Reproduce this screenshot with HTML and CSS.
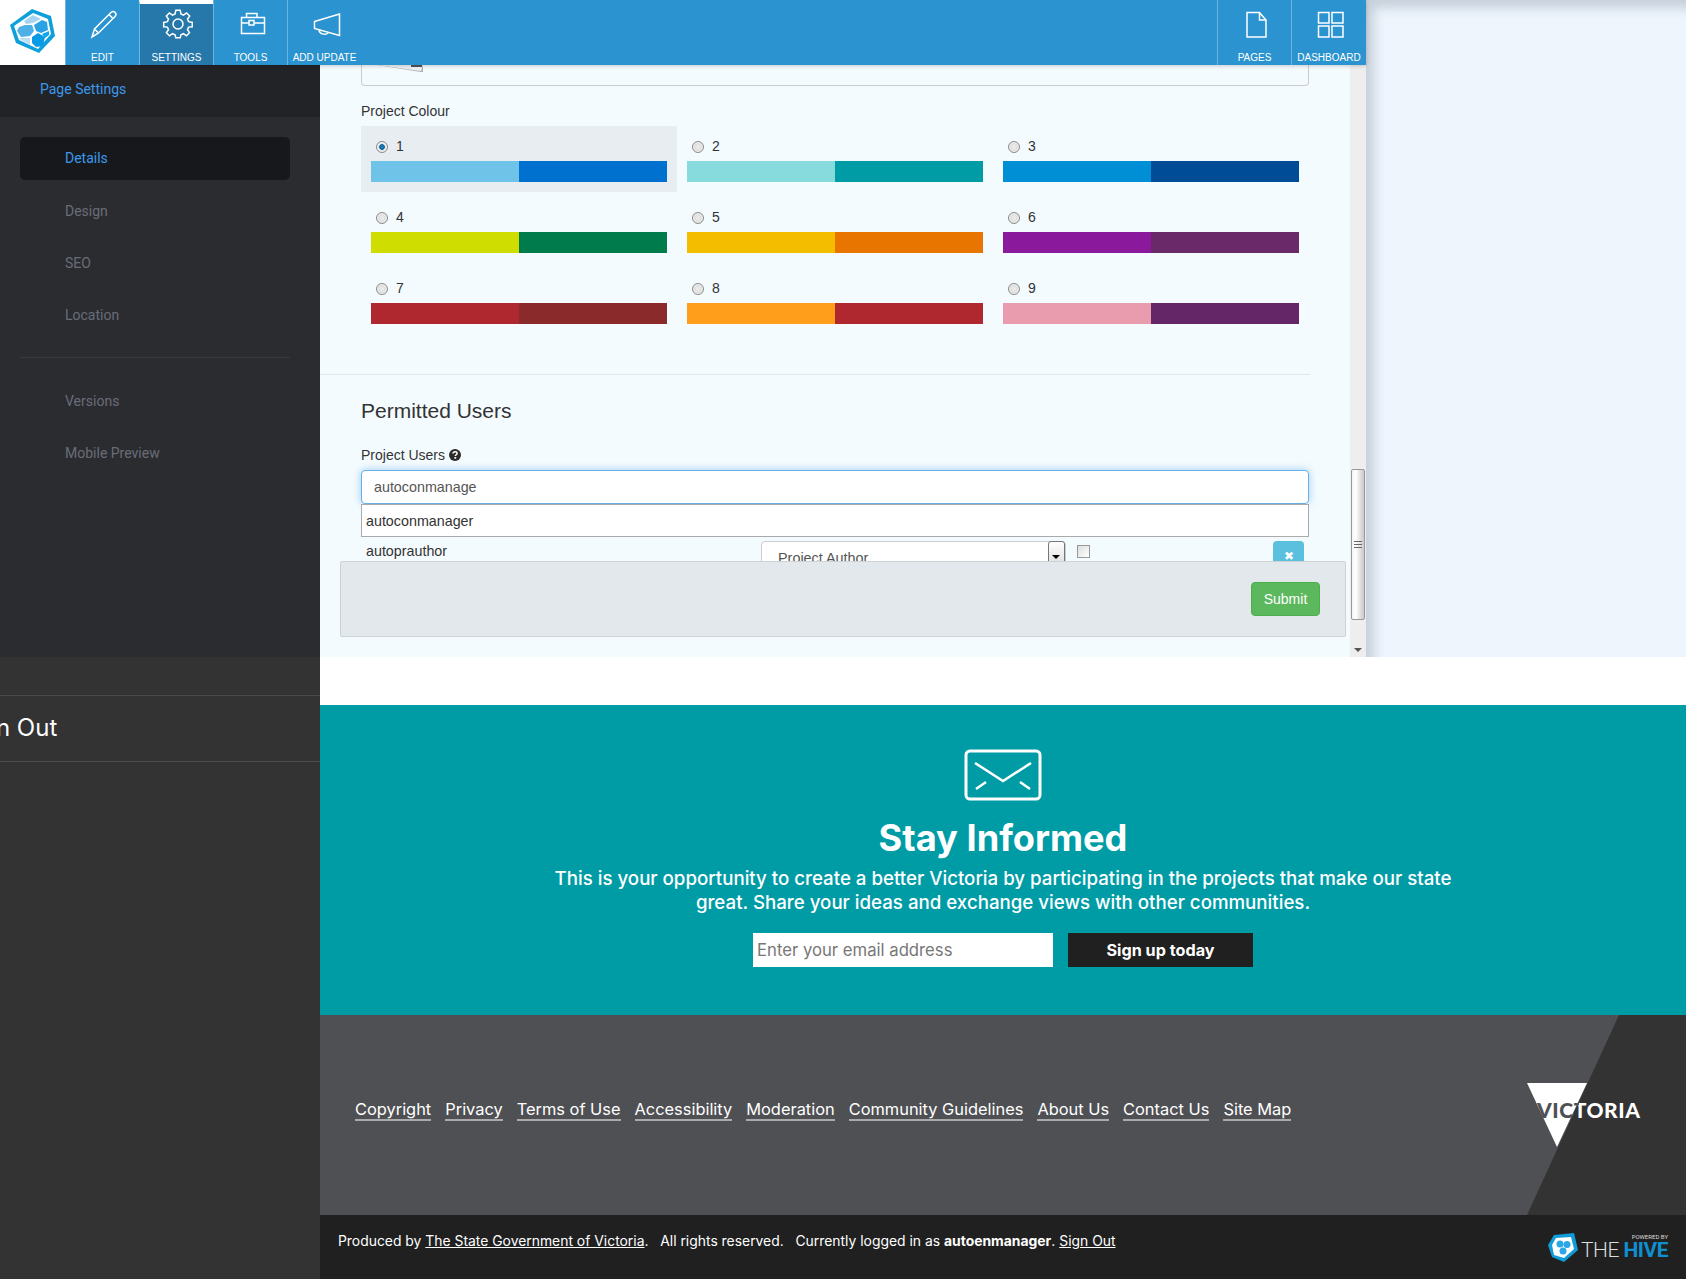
FILE: index.html
```html
<!DOCTYPE html>
<html lang="en">
<head>
<meta charset="UTF-8">
<title>Page Settings</title>
<link rel="stylesheet" href="styles.css">
</head>
<body>
  <div class="editor">
    <nav class="topbar">
      <a class="logo" href="#">
        <svg width="65" height="65" viewBox="0 0 65 65">
          <polygon points="32,9 51,16 55,36 39,53 16,43 10,25" fill="#0ea0da"/>
          <polygon points="33,13 48,19 51,34 38,49 19,40 14,26" fill="#fff"/>
          <polygon points="24,21 33,15 41,19 33,23 26,24" fill="#a6d3f0"/>
          <polygon points="19,27 25,25 32,25 34,31 30,36 21,37 17,31" fill="#4fb0e8"/>
          <polygon points="34,25 42,20 47,22 48,30 41,33 36,31" fill="#2ba2e4"/>
          <polygon points="32,37 38,33 45,37 43,46 36,47 32,43" fill="#0a9be6"/>
          <polygon points="42,34 49,31 49,35 45,38" fill="#0fa6ec"/>
          <polygon points="19,38 30,38 30,45 21,40" fill="#bcdff5"/>
        </svg>
      </a>
      <a class="nav-item" href="#">
        <svg width="32" height="32" viewBox="0 0 32 32" class="line-icon"><path d="M5 29 7.500 21 24 4.500C25.500 3.200 27.200 3.400 28.200 4.500 29.300 5.700 29.200 7.200 28 8.500L11.500 25ZM7.500 21 11.500 25M22 6.500 26 10.500"/></svg>
        <span>EDIT</span>
      </a>
      <a class="nav-item active" href="#">
        <svg width="32" height="32" viewBox="0 0 32 32" class="line-icon"><circle cx="17" cy="16" r="5"/><path d="M14.800 3.500H19.200L19.900 7.200 22.500 8.300 25.600 6.100 28.700 9.200 26.500 12.300 27.600 14.900 31.300 15.600V20L27.600 20.300 26.500 22.900 28.500 25.900 25.400 29 22.500 26.900 19.900 28 19.200 31H14.800L14.100 28 11.500 26.900 8.500 29 5.400 25.900 7.500 22.900 6.400 20.300 2.700 20V15.600L6.400 14.900 7.500 12.300 5.300 9.200 8.400 6.100 11.500 8.300 14.100 7.200Z" transform="translate(0 -1.200)"/></svg>
        <span>SETTINGS</span>
      </a>
      <a class="nav-item" href="#">
        <svg width="32" height="32" viewBox="0 0 32 32" class="line-icon"><path d="M6.500 9.500H29.500V25.500H6.500ZM6.500 15H14M19 15H29.500M11.500 9.500V5.500H22V9.500M14 12.500H19V17H14Z"/></svg>
        <span>TOOLS</span>
      </a>
      <a class="nav-item" href="#">
        <svg width="32" height="32" viewBox="0 0 32 32" class="line-icon"><path d="M5.500 13.500 30.500 6V27.500L5.500 20.500ZM10 21.500C10 27 19 27.500 19 24"/></svg>
        <span>ADD UPDATE</span>
      </a>
      <a class="nav-item nav-push" href="#">
        <svg width="32" height="32" viewBox="0 0 32 32" class="line-icon"><path d="M8 4.500H20.500L27 12V29H8ZM20.500 4.500V12H27"/></svg>
        <span>PAGES</span>
      </a>
      <a class="nav-item" href="#">
        <svg width="32" height="32" viewBox="0 0 32 32" class="line-icon"><path d="M5.500 4.500H16V15H5.500ZM19 4.500H30V15H19ZM5.500 18H16V29H5.500ZM19 18H30V29H19Z"/></svg>
        <span>DASHBOARD</span>
      </a>
    </nav>

    <div class="editor-body">
      <aside class="side">
        <h3 class="side-title">Page Settings</h3>
        <ul class="side-menu">
          <li class="selected">Details</li>
          <li>Design</li>
          <li>SEO</li>
          <li class="last-group">Location</li>
          <li>Versions</li>
          <li>Mobile Preview</li>
        </ul>
      </aside>

      <main class="content">
        <div class="scroll-area">
          <div class="image-box">
            <svg class="image-scrap" width="48" height="8" viewBox="0 0 48 8"><polygon points="0,0 46,0 46,7 44,7" fill="#aab0b4"/><polygon points="0,0 46,0 44,6" fill="#f0f3f5"/><rect x="34" y="0" width="11" height="2" fill="#555"/></svg>
          </div>

          <div class="section">
            <label class="field-label">Project Colour</label>
            <div class="colour-grid">
              <label class="colour-option checked">
                <span class="colour-name"><input type="radio" name="colour" checked> 1</span>
                <span class="colour-bar"><i class="c1a"></i><i class="c1b"></i></span>
              </label>
              <label class="colour-option">
                <span class="colour-name"><input type="radio" name="colour"> 2</span>
                <span class="colour-bar"><i class="c2a"></i><i class="c2b"></i></span>
              </label>
              <label class="colour-option">
                <span class="colour-name"><input type="radio" name="colour"> 3</span>
                <span class="colour-bar"><i class="c3a"></i><i class="c3b"></i></span>
              </label>
              <label class="colour-option">
                <span class="colour-name"><input type="radio" name="colour"> 4</span>
                <span class="colour-bar"><i class="c4a"></i><i class="c4b"></i></span>
              </label>
              <label class="colour-option">
                <span class="colour-name"><input type="radio" name="colour"> 5</span>
                <span class="colour-bar"><i class="c5a"></i><i class="c5b"></i></span>
              </label>
              <label class="colour-option">
                <span class="colour-name"><input type="radio" name="colour"> 6</span>
                <span class="colour-bar"><i class="c6a"></i><i class="c6b"></i></span>
              </label>
              <label class="colour-option">
                <span class="colour-name"><input type="radio" name="colour"> 7</span>
                <span class="colour-bar"><i class="c7a"></i><i class="c7b"></i></span>
              </label>
              <label class="colour-option">
                <span class="colour-name"><input type="radio" name="colour"> 8</span>
                <span class="colour-bar"><i class="c8a"></i><i class="c8b"></i></span>
              </label>
              <label class="colour-option">
                <span class="colour-name"><input type="radio" name="colour"> 9</span>
                <span class="colour-bar"><i class="c9a"></i><i class="c9b"></i></span>
              </label>
            </div>
          </div>

          <hr class="rule">

          <div class="section">
            <h2 class="section-title">Permitted Users</h2>
            <label class="field-label users-label">Project Users
              <svg width="12" height="12" viewBox="0 0 12 12"><circle cx="6" cy="6" r="6" fill="#2b2b2b"/><path d="M4 4.600C4 3.400 4.900 2.700 6.100 2.700 7.300 2.700 8.100 3.400 8.100 4.400 8.100 5.700 6.300 5.800 6.300 7" fill="none" stroke="#fff" stroke-width="1.500"/><rect x="5.400" y="8" width="1.800" height="1.700" fill="#fff"/></svg>
            </label>
            <input class="user-input" type="text" value="autoconmanage">
            <div class="suggest">autoconmanager</div>
            <div class="user-row">
              <span class="user-name">autoprauthor</span>
              <div class="role-select"><span>Project Author</span><b class="role-arrow"></b></div>
              <input class="role-check" type="checkbox">
              <button class="remove-btn" type="button">&#10006;</button>
            </div>
          </div>
        </div>

        <div class="form-actions">
          <button class="submit-btn" type="submit">Submit</button>
        </div>

        <div class="scrollbar">
          <div class="scroll-thumb"><i></i></div>
          <b class="scroll-down"></b>
        </div>
      </main>
    </div>
    <div class="backdrop"></div>
  </div>

  <div class="page">
    <aside class="drawer">
      <div class="drawer-row"><span>Sign Out</span></div>
    </aside>

    <div class="page-main">
      <div class="white-strip"></div>

      <section class="signup">
        <svg class="mail-icon" width="78" height="52" viewBox="0 0 78 52">
          <rect x="2" y="2" width="74" height="48" rx="4" fill="none" stroke="#fff" stroke-width="3"/>
          <path d="M11 14 39 32 67 14M12 40 22 33M66 40 56 33" fill="none" stroke="#fff" stroke-width="2.500"/>
        </svg>
        <h2 class="signup-title">Stay Informed</h2>
        <p class="signup-text">This is your opportunity to create a better Victoria by participating in the projects that make our state great. Share your ideas and exchange views with other communities.</p>
        <form class="signup-form">
          <input class="email-input" type="text" placeholder="Enter your email address">
          <button class="signup-btn" type="button">Sign up today</button>
        </form>
      </section>

      <footer class="links-band">
        <ul class="footer-links">
          <li><a href="#">Copyright</a></li>
          <li><a href="#">Privacy</a></li>
          <li><a href="#">Terms of Use</a></li>
          <li><a href="#">Accessibility</a></li>
          <li><a href="#">Moderation</a></li>
          <li><a href="#">Community Guidelines</a></li>
          <li><a href="#">About Us</a></li>
          <li><a href="#">Contact Us</a></li>
          <li><a href="#">Site Map</a></li>
        </ul>
        <svg class="vic-logo" width="114" height="64" viewBox="0 0 114 64">
          <defs>
            <linearGradient id="vicFill" gradientUnits="userSpaceOnUse" x1="48" y1="24" x2="52" y2="26">
              <stop offset="0.5" stop-color="#4f5054"/>
              <stop offset="0.5" stop-color="#fff"/>
            </linearGradient>
          </defs>
          <polygon points="0,0 60,0 30,64" fill="#fff"/>
          <text x="10" y="35" class="vic-text" fill="url(#vicFill)" textLength="103">VICTORIA</text>
        </svg>
      </footer>

      <footer class="legal-band">
        <p class="legal">Produced by <a href="#">The State Government of Victoria</a>. &nbsp; All rights reserved. &nbsp; Currently logged in as <b>autoenmanager</b>. <a href="#">Sign Out</a></p>
        <div class="hive">
          <svg width="30" height="30" viewBox="0 0 30 30">
            <polygon points="6,3 26,1 30,18 16,30 4,25 0,13" fill="#0f9cd8"/>
            <polygon points="8,6 23,5 26,17 16,26 6,23 4,13" fill="#fff"/>
            <circle cx="12" cy="12" r="3.500" fill="#2ba6e6"/>
            <circle cx="19" cy="12.500" r="3.500" fill="#2ba6e6"/>
            <circle cx="15" cy="19" r="3.500" fill="#2ba6e6"/>
          </svg>
          <div class="hive-text">
            <small>POWERED BY</small>
            <div class="hive-name">THE <b>HIVE</b></div>
          </div>
        </div>
      </footer>
    </div>
  </div>
</body>
</html>
```

FILE: styles.css
```css
* {
  box-sizing: border-box;
}

body {
  margin: 0;
  height: 1279px;
  overflow: hidden;
  font-family: "Liberation Sans", sans-serif;
  font-size: 14px;
  color: #333;
  background: #fff;
}

/* editor overlay */
.editor {
  position: relative;
  height: 657px;
  width: 100%;
  background: #eef5fd;
  overflow: hidden;
}

.backdrop {
  position: absolute;
  top: 0;
  left: 1366px;
  right: 0;
  bottom: 0;
  box-shadow: inset 14px 14px 12px -6px #c6d0da;
}

.topbar {
  position: relative;
  z-index: 3;
  display: flex;
  width: 1366px;
  height: 65px;
  background: #2b93cf;
  box-shadow: 0 1px 4px rgba(0, 0, 0, 0.2);
}

.logo {
  display: block;
  width: 65px;
  background: #fff;
}

.logo svg {
  display: block;
}

.nav-item {
  display: flex;
  flex-direction: column;
  align-items: center;
  width: 74px;
  padding-top: 8px;
  border-left: 1px solid #6db5de;
  color: #fff;
  font-size: 10px;
  text-decoration: none;
}

.nav-item:last-child {
  width: 75px;
}

.nav-item span {
  margin-top: 12px;
  white-space: nowrap;
}

.nav-item.active {
  background: #2678ab;
  border-top: 4px solid #fff;
  padding-top: 4px;
}

.nav-push {
  margin-left: auto;
}

.line-icon {
  fill: none;
  stroke: #fff;
  stroke-width: 1.5;
}

.editor-body {
  display: flex;
  width: 1366px;
  height: 592px;
}

.side {
  width: 320px;
  background: #2b2c30;
}

.side-title {
  margin: 0;
  height: 52px;
  padding-left: 40px;
  line-height: 49px;
  font-family: Roboto, sans-serif;
  font-size: 14px;
  font-weight: 400;
  color: #3b99ea;
  background: #222327;
}

.side-menu {
  list-style: none;
  margin: 0;
  padding: 20px 30px 0 20px;
  font-family: Roboto, sans-serif;
  font-size: 14px;
  color: #696c78;
}

.side-menu li {
  height: 43px;
  margin-bottom: 9px;
  padding-left: 45px;
  line-height: 42px;
}

.side-menu .selected {
  margin-bottom: 10px;
  background: #17181c;
  border-radius: 5px;
  color: #3b99ea;
}

.side-menu .last-group {
  height: 64px;
  margin-bottom: 22px;
  border-bottom: 1px solid #38393e;
}

.content {
  position: relative;
  flex: 1;
  background: #f4fbff;
  overflow: hidden;
}

.scroll-area {
  padding-right: 16px;
}

.image-box {
  position: relative;
  height: 21px;
  margin: 0 41px 0 41px;
  border: 1px solid #ccc;
  border-top: 0;
  border-radius: 0 0 4px 4px;
}

.image-scrap {
  position: absolute;
  left: 15px;
  top: 0;
}

.section {
  padding: 0 41px;
}

.field-label {
  display: block;
  height: 20px;
  margin-top: 15px;
  line-height: 20px;
  color: #333;
}

.colour-grid {
  display: grid;
  grid-template-columns: repeat(3, 316px);
  grid-auto-rows: 66px;
  row-gap: 5px;
  margin-top: 5px;
}

.colour-option {
  display: block;
  padding: 10px 10px 0;
}

.colour-option.checked {
  background: #e7edf0;
}

.colour-name {
  display: flex;
  align-items: center;
  height: 20px;
  padding-left: 5px;
  gap: 8px;
}

.colour-name input {
  appearance: none;
  width: 12px;
  height: 12px;
  margin: 2px 0 0;
  border: 1px solid #8a8a8a;
  border-radius: 50%;
  background: radial-gradient(circle, #eee 0, #d0d0d0 100%);
  box-shadow: inset 0 0 0 1px #f4f4f4;
}

.colour-name input:checked {
  background: radial-gradient(circle, #1f8fd1 0, #0b5f94 35%, #e8e8e8 45%, #ddd 100%);
}

.colour-bar {
  display: flex;
  height: 21px;
  margin-top: 5px;
}

.colour-bar i {
  flex: 1;
}

.c1a { background: #70c3e8; }
.c1b { background: #0071ce; }
.c2a { background: #87dbdd; }
.c2b { background: #009ca6; }
.c3a { background: #008fd5; }
.c3b { background: #004c97; }
.c4a { background: #d0dd00; }
.c4b { background: #007b4b; }
.c5a { background: #f5bd00; }
.c5b { background: #e87500; }
.c6a { background: #8a1a9b; }
.c6b { background: #6a2a6a; }
.c7a { background: #af272f; }
.c7b { background: #8a2a2b; }
.c8a { background: #ff9e1b; }
.c8b { background: #af272f; }
.c9a { background: #e89cae; }
.c9b { background: #642667; }

.rule {
  width: 990px;
  height: 1px;
  margin: 40px 0 0;
  border: 0;
  background: #e3e8ea;
}

.section-title {
  margin: 25px 0 0;
  font-size: 21px;
  font-weight: 400;
  line-height: 22px;
  color: #333;
}

.users-label {
  margin-top: 23px;
  margin-bottom: 5px;
}

.users-label svg {
  vertical-align: -1px;
}

.user-input {
  display: block;
  width: 100%;
  height: 34px;
  padding: 0 12px;
  border: 1px solid #66afe9;
  border-radius: 4px;
  background: #fff;
  box-shadow: 0 0 8px rgba(102, 175, 233, 0.6);
  outline: 0;
  font: 14.300px "Liberation Sans", sans-serif;
  color: #555;
}

.suggest {
  height: 33px;
  padding-left: 4px;
  border: 1px solid #aaa;
  background: #fff;
  line-height: 32px;
  font-size: 14.300px;
  color: #333;
}

.user-row {
  position: relative;
  display: flex;
  height: 40px;
  margin-top: 4px;
  padding-left: 5px;
  font-size: 14.300px;
}

.user-name {
  width: 395px;
  line-height: 20px;
  color: #333;
}

.role-select {
  display: flex;
  justify-content: space-between;
  width: 305px;
  height: 34px;
  padding: 8px 0 0 16px;
  border: 1px solid #ccc;
  border-radius: 4px;
  background: #fff;
  color: #555;
  font-size: 14.400px;
}

.role-arrow {
  position: relative;
  width: 17px;
  height: 26px;
  margin-top: -9px;
  border: 1px solid #777;
  border-radius: 3px;
  background: linear-gradient(#fff, #ddd);
}

.role-arrow::after {
  content: "";
  position: absolute;
  left: 3px;
  top: 13px;
  border: 4px solid transparent;
  border-top: 4px solid #000;
}

.role-check {
  appearance: none;
  width: 13px;
  height: 13px;
  margin: 4px 0 0 11px;
  border: 1px solid #999;
  background: linear-gradient(135deg, #ddd, #fff);
}

.remove-btn {
  width: 31px;
  height: 34px;
  margin: 0 0 0 183px;
  padding: 0 0 4px;
  border: 0;
  border-radius: 4px;
  background: #5bc0de;
  color: #fff;
  font-size: 12px;
}

.form-actions {
  position: absolute;
  left: 20px;
  top: 496px;
  display: flex;
  justify-content: flex-end;
  align-items: center;
  width: 1006px;
  height: 76px;
  padding-right: 25px;
  border: 1px solid #cdd2d5;
  border-radius: 2px;
  background: #e2e8eb;
}

.submit-btn {
  width: 69px;
  height: 34px;
  border: 1px solid #4cae4c;
  border-radius: 4px;
  background: #5cb85c;
  color: #fff;
  font: 14px "Liberation Sans", sans-serif;
}

.scrollbar {
  position: absolute;
  top: 0;
  right: 0;
  bottom: 0;
  width: 16px;
  background: #eee;
}

.scroll-thumb {
  position: absolute;
  top: 404px;
  left: 1px;
  display: flex;
  align-items: center;
  justify-content: center;
  width: 14px;
  height: 151px;
  border: 1px solid #999;
  border-radius: 2px;
  background: linear-gradient(90deg, #f4f4f4, #fff 30%, #c8c8c8);
}

.scroll-thumb i {
  width: 8px;
  height: 8px;
  background: repeating-linear-gradient(#666 0, #666 1px, transparent 1px, transparent 3px);
}

.scroll-down {
  position: absolute;
  left: 4px;
  bottom: 5px;
  border: 4px solid transparent;
  border-top: 4px solid #555;
  border-bottom: 0;
}

/* page behind the overlay */
.page {
  display: flex;
  height: 622px;
}

.drawer {
  width: 320px;
  padding-top: 38px;
  background: #333;
}

.drawer-row {
  height: 67px;
  border-top: 1px solid #4a4a4a;
  border-bottom: 1px solid #4a4a4a;
  overflow: hidden;
  font-family: Inter, sans-serif;
  font-size: 24px;
  line-height: 63px;
  color: #fff;
}

.drawer-row span {
  display: block;
  margin-left: -40px;
  white-space: nowrap;
}

.page-main {
  flex: 1;
  display: flex;
  flex-direction: column;
}

.white-strip {
  height: 48px;
  background: #fff;
}

.signup {
  display: flex;
  flex-direction: column;
  align-items: center;
  height: 310px;
  padding-top: 44px;
  background: #009ca6;
  color: #fff;
  font-family: Inter, sans-serif;
}

.mail-icon {
  display: block;
}

.signup-title {
  margin: 15px 0 0;
  font-size: 36.200px;
  font-weight: 700;
  line-height: 44px;
}

.signup-text {
  width: 930px;
  margin: 7px 0 0;
  font-size: 18.700px;
  font-weight: 500;
  line-height: 24px;
  text-align: center;
}

.signup-form {
  display: flex;
  gap: 15px;
  margin-top: 18px;
}

.email-input {
  width: 300px;
  height: 34px;
  padding: 0 4px;
  border: 0;
  font: 16.700px Inter, sans-serif;
}

.email-input::placeholder {
  color: #777;
}

.signup-btn {
  width: 185px;
  height: 34px;
  border: 0;
  background: #202020;
  color: #fff;
  font: 700 16.200px Inter, sans-serif;
}

.links-band {
  position: relative;
  height: 200px;
  background: #4f5054;
  overflow: hidden;
  font-family: Inter, sans-serif;
}

.links-band::before {
  content: "";
  position: absolute;
  inset: 0;
  background: #333;
  clip-path: polygon(1299px 0, 100% 0, 100% 100%, 1207px 100%);
}

.footer-links {
  position: relative;
  display: flex;
  gap: 14px;
  list-style: none;
  margin: 0;
  padding: 84px 0 0 35px;
  font-size: 16.400px;
}

.footer-links a {
  color: #fff;
  text-decoration: none;
  border-bottom: 2px solid #aaa;
}

.vic-logo {
  position: absolute;
  left: 1207px;
  top: 68px;
}

.vic-text {
  font-family: Lato, sans-serif;
  font-size: 21px;
  font-weight: 900;
}

.legal-band {
  display: flex;
  align-items: center;
  justify-content: space-between;
  height: 64px;
  padding: 0 18px;
  background: #202020;
  color: #fff;
  font-family: Inter, sans-serif;
}

.legal {
  margin: 0 0 12px;
  font-size: 13.900px;
}

.legal a {
  color: #fff;
}

.hive {
  display: flex;
  align-items: center;
  gap: 3px;
}

.hive-text {
  text-align: right;
}

.hive-text small {
  display: block;
  font-family: Roboto, sans-serif;
  font-size: 6px;
  line-height: 6px;
  color: #ddd;
}

.hive-name {
  font-family: Roboto, sans-serif;
  font-size: 21px;
  line-height: 21px;
  font-weight: 300;
  letter-spacing: -0.5px;
  color: #ddd;
}

.hive-name b {
  font-weight: 700;
  color: #0f8fd0;
}
```
